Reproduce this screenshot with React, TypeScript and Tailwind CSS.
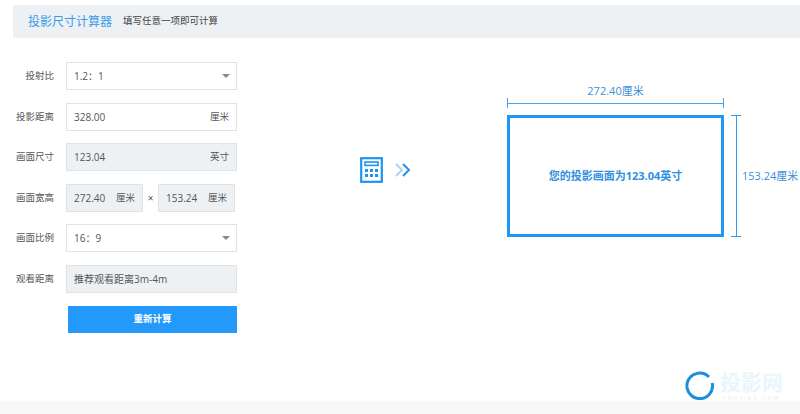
const FONT = "font-['Open_Sans','Noto_Sans_CJK_SC',sans-serif]";

function Field({ label, className = "", children }: { label: string; className?: string; children: React.ReactNode }) {
  return (
    <div className={`flex items-center ${className}`}>
      <span className="w-[42px] shrink-0 whitespace-nowrap text-right text-[9.5px] leading-[28px] text-[#555]">{label}</span>
      <div className="ml-[12px] flex">{children}</div>
    </div>
  );
}

function Box({ value, unit, gray, caret, width = "w-[171px]" }: { value: string; unit?: string; gray?: boolean; caret?: boolean; width?: string }) {
  return (
    <div
      className={`flex h-[28px] shrink-0 items-center justify-between border border-[#dfe3e6] pl-[7px] pr-[7px] text-[10px] text-[#555] ${width} ${gray ? "bg-[#edf1f4]" : "bg-white"}`}
    >
      <span className="whitespace-nowrap">{value}</span>
      {unit && <span className="whitespace-nowrap text-[9.5px]">{unit}</span>}
      {caret && <span className="-mr-px h-0 w-0 border-x-[4px] border-t-[4px] border-x-transparent border-t-[#8a8a8a]" />}
    </div>
  );
}

function CalcIcon() {
  return (
    <svg width="24" height="26" viewBox="0 0 24 26" fill="none">
      <rect x="1.2" y="1.2" width="20.6" height="23.6" stroke="#1f93f2" strokeWidth="2.2" />
      <rect x="5" y="5" width="13" height="3.4" stroke="#1f93f2" strokeWidth="1.6" />
      <g fill="#1f93f2">
        <rect x="5" y="12" width="3" height="3" />
        <rect x="10" y="12" width="3" height="3" />
        <rect x="15" y="12" width="3" height="3" />
        <rect x="5" y="17" width="3" height="3" />
        <rect x="10" y="17" width="3" height="3" />
        <rect x="15" y="17" width="3" height="3" />
      </g>
    </svg>
  );
}

function Chevrons() {
  return (
    <svg width="17" height="14" viewBox="0 0 17 14" fill="none">
      <path d="M1 1l6 6-6 6" stroke="#a9d3f7" strokeWidth="2" />
      <path d="M8 1l6 6-6 6" stroke="#2b8fe6" strokeWidth="2" />
    </svg>
  );
}

function LogoRing() {
  return (
    <svg width="29" height="29" viewBox="0 0 29 29" fill="none">
      <path d="M24 6A12.8 12.8 0 1 0 27.2 12" stroke="#1c8fdc" strokeWidth="3" />
    </svg>
  );
}

export default function App() {
  return (
    <div className={`relative h-[414px] w-[800px] overflow-hidden bg-white ${FONT}`}>
      <div className="ml-[13px] mt-[5px] flex h-[33px] items-center bg-[#edf1f4] pl-[15px]">
        <span className="text-[12px] text-[#3a9be8]">投影尺寸计算器</span>
        <span className="ml-[11px] text-[9.5px] text-[#444]">填写任意一项即可计算</span>
      </div>

      <div className="flex">
        <div className="ml-[12px] mt-[24px] w-[225px] shrink-0">
          <Field label="投射比">
            <Box value="1.2：1" caret />
          </Field>
          <Field label="投影距离" className="mt-[13px]">
            <Box value="328.00" unit="厘米" />
          </Field>
          <Field label="画面尺寸" className="mt-[12px]">
            <Box value="123.04" unit="英寸" gray />
          </Field>
          <Field label="画面宽高" className="mt-[13px]">
            <Box value="272.40" unit="厘米" gray width="w-[77px]" />
            <span className="w-[15px] text-center text-[10px] leading-[28px] text-[#555]">×</span>
            <Box value="153.24" unit="厘米" gray width="w-[77px]" />
          </Field>
          <Field label="画面比例" className="mt-[12px]">
            <Box value="16：9" caret />
          </Field>
          <Field label="观看距离" className="mt-[13px]">
            <Box value="推荐观看距离3m-4m" gray />
          </Field>
          <button className="ml-[56px] mt-[13px] flex h-[27px] w-[169px] items-center justify-center bg-[#2399fb] text-[9.5px] font-bold text-white">
            重新计算
          </button>
        </div>

        <div className="ml-[123px] mt-[119px] flex h-[26px] shrink-0 items-center gap-[11px] self-start">
          <CalcIcon />
          <Chevrons />
        </div>

        <div className="ml-[95px] mt-[45px] shrink-0 self-start">
          <div className="w-[217px] text-center text-[11px] leading-[15px] text-[#3a8fd8]">272.40厘米</div>
          <div className="flex h-[10px] w-[217px] items-center border-x border-[#4aa3ea]">
            <div className="w-full border-t border-[#4aa3ea]" />
          </div>
          <div className="mt-[7px] flex">
            <div className="flex h-[122px] w-[217px] items-center justify-center border-[3px] border-[#2196f3] text-[11px] font-bold text-[#2f8fe0]">
              您的投影画面为123.04英寸
            </div>
            <div className="ml-[7px] flex h-[122px] w-[10px] flex-col items-center justify-between border-y border-[#3a9be8]">
              <div className="h-full border-l border-[#3a9be8]" />
            </div>
            <div className="ml-px self-center whitespace-nowrap text-[11px] text-[#3a8fd8]">153.24厘米</div>
          </div>
        </div>
      </div>

      <div className="absolute inset-x-0 bottom-0 h-[13px] bg-[#f8f8f8]" />

      <div className="absolute left-[685px] top-[371px] flex">
        <LogoRing />
        <div className="ml-[6px] flex flex-col items-center">
          <span className="text-[21px] font-bold leading-[22px] text-[#eaf6fd]">投影网</span>
          <span className="mt-[2px] text-[5px] leading-[6px] tracking-[2px] text-[#e2edf4]">TOUYING.COM</span>
        </div>
      </div>
    </div>
  );
}
